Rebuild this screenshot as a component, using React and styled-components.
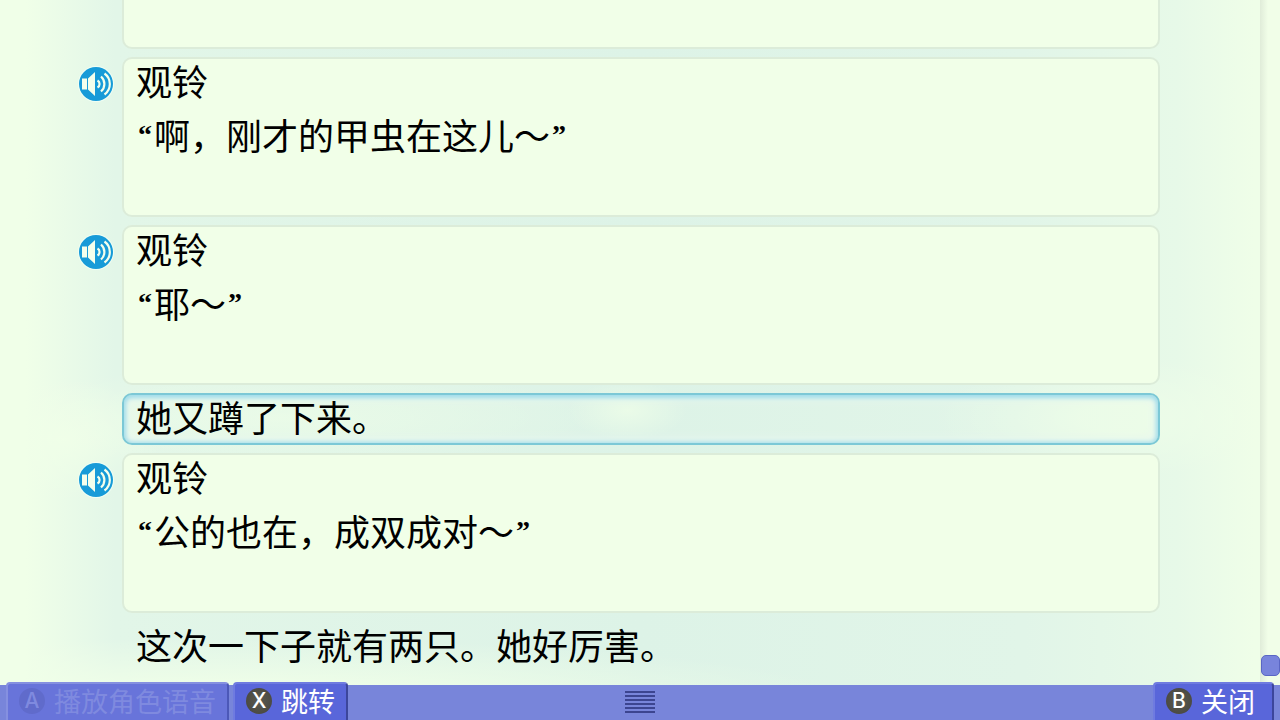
import React from "react";
import styled, { createGlobalStyle } from "styled-components";

const GlobalStyle = createGlobalStyle`
  * {
    box-sizing: border-box;
    margin: 0;
    padding: 0;
  }

  body {
    background-color: #f0ffe8;
    font-family: "Noto Sans CJK SC", sans-serif;
    overflow: hidden;
  }
`;

const Screen = styled.div`
  display: flex;
  flex-direction: column;
  height: 100vh;
  background:
    radial-gradient(ellipse 60px 30px at 49% 57%, rgba(240, 255, 232, 0.7), transparent),
    radial-gradient(ellipse 180px 60px at 87% 58%, rgba(240, 255, 232, 0.6) 20%, transparent),
    radial-gradient(ellipse 320px 50px at 22% 58%, rgba(240, 255, 232, 0.6), transparent),
    radial-gradient(ellipse 100px 60px at 5% 61%, rgba(240, 255, 232, 0.9), transparent),
    radial-gradient(ellipse 620px 60px at 18% 97%, rgba(240, 255, 232, 0.8) 30%, transparent),
    linear-gradient(
      to right,
      #f0ffe8 2%,
      #eafbe8 5%,
      #e2f6e8 9%,
      #ddf3e7 50%,
      #e1f5e8 80%,
      #e7f9e8 92%,
      #effee8 98%
    );
`;

const Main = styled.main`
  display: flex;
  flex: 1;
  min-height: 0;
`;

const Backlog = styled.ol`
  display: flex;
  flex: 1;
  flex-direction: column;
  justify-content: flex-end;
  gap: 8px;
  padding: 0 100px 9px 78px;
  overflow: hidden;
  list-style: none;
`;

const Entry = styled.li`
  display: grid;
  flex-shrink: 0;
  grid-template-columns: 36px 1fr;
  column-gap: 8px;
`;

const VoiceButton = styled.button`
  width: 36px;
  height: 36px;
  margin-top: 9px;
  border: none;
  border-radius: 50%;
  background: none;
  cursor: pointer;

  svg {
    display: block;
  }
`;

const Card = styled.div`
  grid-column: 2;
  min-height: ${(props) => (props.$spoken ? "160px" : "52px")};
  padding: 0 12px;
  border: 2px solid transparent;
  border-radius: 10px;
  font-size: 36px;
  line-height: 42px;
  color: #000;

  ${(props) =>
    props.$spoken &&
    `
    border-color: #dcecd9;
    background-color: #f1ffe8;
  `}

  ${(props) =>
    props.$selected &&
    `
    border-color: #7cc8d6;
    box-shadow: inset 0 1px 4px 2px #9fdcea, inset 0 0 8px 4px #e8f6f0;
  `}
`;

const Speaker = styled.p`
  margin-bottom: 12px;
`;

const Mark = styled.span`
  display: inline-block;
  width: 18px;
  padding: 0 2px;
  font-family: "Liberation Serif", serif;
  font-size: 28px;
  font-weight: bold;
  line-height: 28px;
  text-align: ${(props) => (props.$open ? "right" : "left")};
  vertical-align: 6px;
`;

const Track = styled.div`
  display: flex;
  flex-direction: column;
  justify-content: flex-end;
  width: 20px;
  padding: 0 0 6px 1px;
  background: linear-gradient(to right, #e0ecd9, #f1fee8 8px);
`;

const Thumb = styled.div`
  height: 21px;
  border: 1px solid #5a66c4;
  border-radius: 5px;
  background-color: #7884dc;
`;

const Footer = styled.footer`
  display: grid;
  grid-template-columns: 1fr auto 1fr;
  align-items: end;
  height: 38px;
  padding: 0 6px;
  background: linear-gradient(transparent 3px, #7885da 3px);
`;

const Group = styled.div`
  display: flex;
  gap: 4px;
  justify-content: ${(props) => (props.$end ? "flex-end" : "flex-start")};
`;

const Action = styled.button`
  display: flex;
  align-items: center;
  gap: 9px;
  min-width: ${(props) => (props.$wide ? "121px" : "0")};
  height: 38px;
  padding: 0 11px 2px;
  border: 2px solid #6f7be0;
  border-right-color: #3c469c;
  border-bottom: none;
  border-radius: 4px 4px 0 0;
  background-color: #5966da;
  color: #fff;
  font-family: "Noto Sans CJK SC", sans-serif;
  font-size: 27px;
  line-height: 34px;
  white-space: nowrap;
  cursor: pointer;

  &:disabled {
    border-color: #8590e0;
    border-right-color: #4c58b8;
    background-color: #6874da;
    color: #7f8adf;
    cursor: default;
  }
`;

const Key = styled.span`
  display: flex;
  align-items: center;
  justify-content: center;
  width: 26px;
  height: 26px;
  border-radius: 50%;
  background: radial-gradient(circle, #5b5a50, #45443e);
  font-family: Inter, sans-serif;
  font-size: 21px;
  font-weight: 500;
  line-height: 26px;

  ${Action}:disabled & {
    background: #606bcb;
  }
`;

const Handle = styled.svg`
  align-self: center;
`;

const entries = [
  { id: 1, speaker: "", text: "" },
  { id: 2, speaker: "观铃", text: "啊，刚才的甲虫在这儿～" },
  { id: 3, speaker: "观铃", text: "耶～" },
  { id: 4, text: "她又蹲了下来。", selected: true },
  { id: 5, speaker: "观铃", text: "公的也在，成双成对～" },
  { id: 6, text: "这次一下子就有两只。她好厉害。" },
];

function Voice() {
  return (
    <VoiceButton aria-label="播放语音">
      <svg width="36" height="36" viewBox="0 0 36 36" fill="none">
        <circle cx="18" cy="18" r="18" fill="#f0fff4" />
        <circle cx="18" cy="18" r="17" fill="#179bd8" />
        <path d="M4 12.5h5v11H4zM10 12.5l7-6.5v24l-7-6.5z" fill="#f4ffec" />
        <path
          d="M19.5 14.5a4 4 0 0 1 0 7M23 10.5a10 10 0 0 1 0 15M26.5 7.5a13 13 0 0 1 0 21"
          stroke="#f4ffec"
          strokeWidth="2.2"
        />
      </svg>
    </VoiceButton>
  );
}

export default function App() {
  return (
    <Screen>
      <GlobalStyle />
      <Main>
        <Backlog>
          {entries.map(({ id, speaker, text, selected }) => (
            <Entry key={id}>
              {speaker && <Voice />}
              <Card $spoken={speaker !== undefined} $selected={selected}>
                {speaker && <Speaker>{speaker}</Speaker>}
                {speaker ? (
                  <p>
                    <Mark $open>“</Mark>
                    {text}
                    <Mark>”</Mark>
                  </p>
                ) : (
                  <p>{text}</p>
                )}
              </Card>
            </Entry>
          ))}
        </Backlog>
        <Track>
          <Thumb />
        </Track>
      </Main>
      <Footer>
        <Group>
          <Action disabled>
            <Key>A</Key>播放角色语音
          </Action>
          <Action>
            <Key>X</Key>跳转
          </Action>
        </Group>
        <Handle width="30" height="23" viewBox="0 0 30 23">
          <path
            d="M0 2h30M0 6h30M0 10h30M0 14h30M0 18h30M0 22h30"
            stroke="#3c4590"
            strokeWidth="2"
          />
        </Handle>
        <Group $end>
          <Action $wide>
            <Key>B</Key>关闭
          </Action>
        </Group>
      </Footer>
    </Screen>
  );
}
